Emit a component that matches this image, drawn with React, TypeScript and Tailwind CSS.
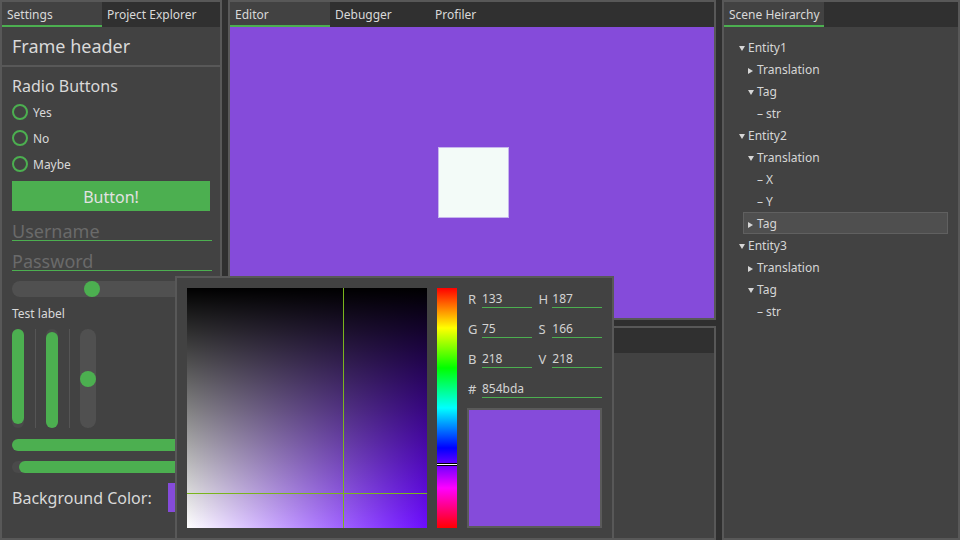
import React from "react";

function Tab({ label, active }: { label: string; active?: boolean }) {
  return (
    <div
      className={
        active
          ? "box-border w-[100px] h-[25px] pl-[5px] pt-[2px] text-[12px] leading-[21px] bg-[#424242] border-b-2 border-[#4caf50] text-[#d9d9d9]"
          : "box-border w-[100px] h-[25px] pl-[5px] pt-[2px] text-[12px] leading-[21px] border-b-2 border-transparent text-[#d9d9d9]"
      }
    >
      {label}
    </div>
  );
}

function DownArrow() {
  return (
    <svg width="6" height="5" viewBox="0 0 6 5" className="mt-[2px]">
      <path d="M0 0H6L3 5Z" fill="#d6d6d6" />
    </svg>
  );
}
function RightArrow() {
  return (
    <svg width="5" height="6" viewBox="0 0 5 6" className="mt-[3px]">
      <path d="M0 0L5 3L0 6Z" fill="#d6d6d6" />
    </svg>
  );
}

type Node = { label: string; level: number; kind: "down" | "right" | "leaf"; selected?: boolean };
const tree: Node[] = [
  { label: "Entity1", level: 0, kind: "down" },
  { label: "Translation", level: 1, kind: "right" },
  { label: "Tag", level: 1, kind: "down" },
  { label: "str", level: 2, kind: "leaf" },
  { label: "Entity2", level: 0, kind: "down" },
  { label: "Translation", level: 1, kind: "down" },
  { label: "X", level: 2, kind: "leaf" },
  { label: "Y", level: 2, kind: "leaf" },
  { label: "Tag", level: 1, kind: "right", selected: true },
  { label: "Entity3", level: 0, kind: "down" },
  { label: "Translation", level: 1, kind: "right" },
  { label: "Tag", level: 1, kind: "down" },
  { label: "str", level: 2, kind: "leaf" },
];
const levelMargin = ["ml-[10px]", "ml-[19px]", "ml-[28px]"];

function Radio({ label }: { label: string }) {
  return (
    <div className="h-[26px] flex items-center">
      <div className="w-[16px] h-[16px] rounded-full border-2 border-[#4caf50]" />
      <span className="ml-[5px] pt-[1px] text-[12px] leading-[16px] text-[#d9d9d9]">{label}</span>
    </div>
  );
}

function Field({ label, value, wide }: { label: string; value: string; wide?: boolean }) {
  return (
    <>
      <span className="w-[15px] pl-[1px] pt-[2px] text-[13px] leading-[18px] text-[#cfcfcf]">{label}</span>
      <div
        className={
          wide
            ? "box-border w-[120px] h-[20px] pt-[2px] border-b border-[#4caf50] text-[12px] leading-[17px] text-[#d4d4d4]"
            : "box-border w-[50px] h-[20px] pt-[2px] border-b border-[#4caf50] text-[12px] leading-[17px] text-[#d4d4d4]"
        }
      >
        {value}
      </div>
    </>
  );
}

export default function App() {
  return (
    <div className="w-[960px] h-[540px] bg-[#2f2f2f] flex gap-[6px] relative overflow-hidden font-['Noto_Sans',sans-serif] text-[#d9d9d9]">
      {/* Left panel */}
      <div className="box-border w-[222px] h-full border-2 border-[#585858] bg-[#424242] flex flex-col shrink-0 overflow-hidden">
        <div className="h-[25px] bg-[#303030] flex shrink-0">
          <Tab label="Settings" active />
          <Tab label="Project Explorer" />
        </div>
        <div className="h-[38px] pl-[10px] text-[18px] leading-[38px] shrink-0">Frame header</div>
        <div className="h-[2px] bg-[#585858] shrink-0" />
        <div className="px-[10px] flex flex-col">
          <div className="mt-[9px] text-[16px] leading-[20px]">Radio Buttons</div>
          <div className="mt-[3px] flex flex-col">
            <Radio label="Yes" />
            <Radio label="No" />
            <Radio label="Maybe" />
          </div>
          <div className="mt-[4px] box-border w-[198px] h-[30px] pt-[2px] bg-[#4caf50] text-center text-[16px] leading-[28px] text-[#e2e2e2]">
            Button!
          </div>
          <div className="mt-[6px] box-border w-[200px] h-[24px] pt-[5px] border-b border-[#4caf50] text-[18px] leading-[18px] text-[#6a6a6a]">
            Username
          </div>
          <div className="mt-[6px] box-border w-[200px] h-[24px] pt-[5px] border-b border-[#4caf50] text-[18px] leading-[18px] text-[#6a6a6a]">
            Password
          </div>
          <div className="mt-[10px] w-[198px] h-[16px] rounded-full bg-[#505050] flex items-center">
            <div className="ml-[72px] w-[16px] h-[16px] rounded-full bg-[#4caf50]" />
          </div>
          <div className="mt-[9px] text-[12px] leading-[16px]">Test label</div>
          <div className="mt-[7px] flex items-start">
            <div className="w-[12px] h-[99px] rounded-full bg-[#4a4a4a] flex flex-col">
              <div className="w-[12px] h-[95px] rounded-full bg-[#4caf50]" />
            </div>
            <div className="ml-[11px] w-px h-[99px] bg-[#555555]" />
            <div className="ml-[10px] w-[12px] h-[99px] rounded-full bg-[#4a4a4a] flex flex-col justify-end">
              <div className="w-[12px] h-[96px] rounded-full bg-[#4caf50]" />
            </div>
            <div className="ml-[11px] w-px h-[99px] bg-[#555555]" />
            <div className="ml-[10px] w-[16px] h-[99px] rounded-full bg-[#505050] flex flex-col">
              <div className="mt-[42px] w-[16px] h-[16px] rounded-full bg-[#4caf50]" />
            </div>
          </div>
          <div className="mt-[11px] w-[198px] h-[12px] rounded-full bg-[#4caf50]" />
          <div className="mt-[10px] w-[198px] h-[12px] rounded-full bg-[#4a4a4a] flex">
            <div className="ml-[7px] flex-1 h-[12px] rounded-full bg-[#4caf50]" />
          </div>
          <div className="mt-[10px] h-[29px] flex items-start">
            <span className="w-[156px] pt-[2px] text-[16px] leading-[27px]">Background Color:</span>
            <div className="w-[40px] h-[29px] bg-[#854bda]" />
          </div>
        </div>
      </div>

      {/* Middle column */}
      <div className="w-[488px] h-full flex flex-col gap-[6px] shrink-0">
        <div className="box-border h-[320px] border-2 border-[#585858] flex flex-col shrink-0">
          <div className="h-[25px] bg-[#303030] flex shrink-0">
            <Tab label="Editor" active />
            <Tab label="Debugger" />
            <Tab label="Profiler" />
          </div>
          <div className="flex-1 bg-[#854bda] pl-[208px] pt-[120px]">
            <div className="box-border w-[71px] h-[71px] bg-[#f3fbf8] border border-[#c7b5ee]" />
          </div>
        </div>
        <div className="box-border flex-1 border-2 border-[#585858] bg-[#424242] flex flex-col">
          <div className="h-[25px] bg-[#303030] shrink-0" />
        </div>
      </div>

      {/* Right panel */}
      <div className="box-border w-[238px] h-full border-2 border-[#585858] bg-[#424242] flex flex-col shrink-0">
        <div className="h-[25px] bg-[#303030] flex shrink-0">
          <Tab label="Scene Heirarchy" active />
        </div>
        <div className="pt-[9px] pr-[10px] flex flex-col">
          {tree.map((n, i) => (
            <div
              key={i}
              className={
                (n.selected
                  ? "bg-[#4f4f4f] border-[#606060] "
                  : "border-transparent ") +
                levelMargin[n.level] +
                " box-border h-[22px] border pl-[4px] flex items-start text-[12px] text-[#d6d6d6]"
              }
            >
              <span className="w-[9px] h-[20px] flex items-center">
                {n.kind === "down" ? (
                  <DownArrow />
                ) : n.kind === "right" ? (
                  <RightArrow />
                ) : (
                  <span className="pt-[2px] leading-[18px]">–</span>
                )}
              </span>
              <span className="pt-[2px] leading-[18px]">{n.label}</span>
            </div>
          ))}
        </div>
      </div>

      {/* Color picker popup */}
      <div className="absolute left-[175px] top-[276px] box-border w-[439px] h-[264px] border-2 border-[#585858] bg-[#424242] p-[10px] flex gap-[10px]">
        <div className="relative w-[240px] h-[240px] shrink-0 bg-[linear-gradient(to_bottom,#000,transparent),linear-gradient(to_right,#fff,#6c0cff)]">
          <div className="absolute left-[156px] top-0 w-px h-full bg-[#7ab51d]" />
          <div className="absolute top-[205px] left-0 h-px w-full bg-[#7ab51d]" />
        </div>
        <div className="relative w-[20px] h-[240px] shrink-0 bg-[linear-gradient(to_bottom,#f00,#ff0,#0f0,#0ff,#00f,#f0f,#f00)]">
          <div className="absolute top-[175px] left-0 box-border w-full h-[3px] bg-white border-y border-black" />
        </div>
        <div className="w-[135px] flex flex-col gap-[10px]">
          <div className="flex h-[20px]">
            <Field label="R" value="133" />
            <div className="w-[6px]" />
            <Field label="H" value="187" />
          </div>
          <div className="flex h-[20px]">
            <Field label="G" value="75" />
            <div className="w-[6px]" />
            <Field label="S" value="166" />
          </div>
          <div className="flex h-[20px]">
            <Field label="B" value="218" />
            <div className="w-[6px]" />
            <Field label="V" value="218" />
          </div>
          <div className="flex h-[20px]">
            <Field label="#" value="854bda" wide />
          </div>
          <div className="box-border h-[120px] border-2 border-[#5a5a5a] bg-[#854bda]" />
        </div>
      </div>
    </div>
  );
}
